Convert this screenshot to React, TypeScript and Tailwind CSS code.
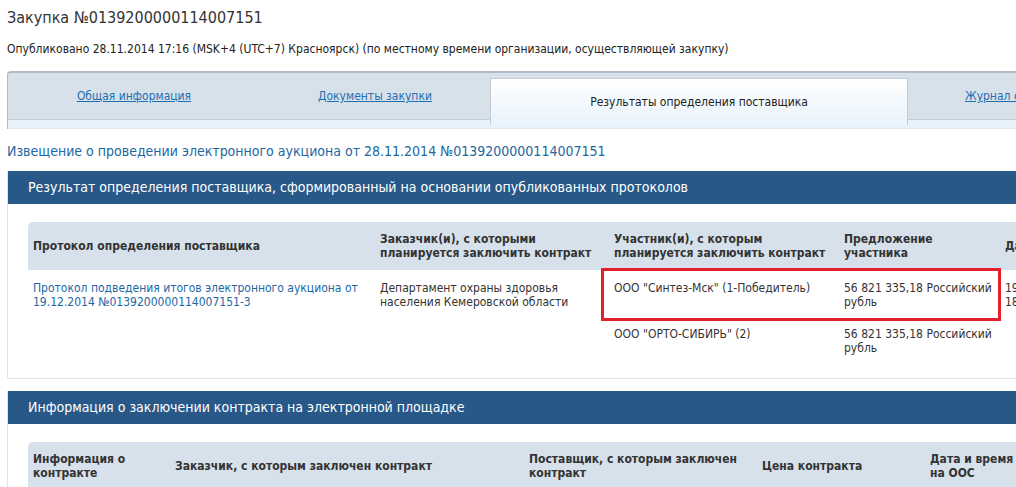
import React from "react";

const font = { fontFamily: '"DejaVu Sans Condensed", "DejaVu Sans", sans-serif' };

function Tab({ label, active, width }: { label: string; active?: boolean; width: string }) {
  if (active) {
    return (
      <div className={`${width} shrink-0 mt-[5px] h-[47px] -mb-px flex items-center justify-center border-x border-t border-[#c3ccd4] bg-gradient-to-b from-white to-[#e9f3fb] text-[12px] text-[#222]`}>
        {label}
      </div>
    );
  }
  return (
    <div className={`${width} shrink-0 h-[46px] flex items-center justify-center`}>
      <span className="text-[12px] text-[#1f6fb3] underline">{label}</span>
    </div>
  );
}

function Cell({ children, bold, className = "" }: { children: React.ReactNode; bold?: boolean; className?: string }) {
  return <div className={`px-[5px] leading-[14px] ${bold ? "font-bold text-[#333]" : ""} ${className}`}>{children}</div>;
}

export default function App() {
  return (
    <div className="relative w-[1016px] h-[487px] overflow-hidden bg-white text-[#333]" style={font}>
      <div className="pl-[7px] pt-[8px]">
        <div className="text-[16px] leading-[20px] text-[#333]">Закупка №0139200000114007151</div>
        <div className="mt-[14px] text-[12px] leading-[14px] text-[#222]">
          Опубликовано 28.11.2014 17:16 (MSK+4 (UTC+7) Красноярск) (по местному времени организации, осуществляющей закупку)
        </div>

        {/* tabs */}
        <div className="mt-[15px] w-[1100px] rounded-tl-[4px] border-t-2 border-l border-[#b0bbc5] bg-[#d6e1ea]">
          <div className="flex h-[46px] items-start">
            <Tab label="Общая информация" width="w-[252px]" />
            <Tab label="Документы закупки" width="w-[230px]" />
            <Tab label="Результаты определения поставщика" width="w-[418px]" active />
            <div className="shrink-0 h-[46px] flex items-center pl-[57px]">
              <span className="text-[12px] text-[#1f6fb3] underline whitespace-nowrap">Журнал событий</span>
            </div>
          </div>
          <div className="h-[10px] bg-[#e8f2fa] border-t border-[#c3ccd4] border-b border-b-[#e2e8ee]" />
        </div>

        <div className="mt-[13px] text-[14px] leading-[18px] text-[#1d67a3]">
          Извещение о проведении электронного аукциона от 28.11.2014 №0139200000114007151
        </div>

        {/* panel 1 */}
        <div className="mt-[11px] w-[1100px] border-l border-b border-[#dde3e9]">
          <div className="h-[33px] bg-[#285887] flex items-center pl-[20px] text-[14px] text-white">
            Результат определения поставщика, сформированный на основании опубликованных протоколов
          </div>
          <div className="pl-[20px] pt-[18px] pb-[23px]">
            <div className="grid grid-cols-[347px_234px_230px_161px_200px] text-[12px]">
              <div className="col-span-5 grid grid-cols-subgrid h-[48px] items-center bg-[#d6e1eb] rounded-tl-[5px]">
                <Cell bold>Протокол определения поставщика</Cell>
                <Cell bold>Заказчик(и), с которыми планируется заключить контракт</Cell>
                <Cell bold>Участник(и), с которым планируется заключить контракт</Cell>
                <Cell bold>Предложение участника</Cell>
                <Cell bold>Дата и время формирования</Cell>
              </div>
              <Cell className="pt-[11px] text-[#1d67a3]">Протокол подведения итогов электронного аукциона от 19.12.2014 №0139200000114007151-3</Cell>
              <Cell className="pt-[11px] text-[#333]">Департамент охраны здоровья населения Кемеровской области</Cell>
              <Cell className="pt-[11px] text-[#333]">ООО "Синтез-Мск" (1-Победитель)</Cell>
              <Cell className="pt-[11px] text-[#333]">56 821 335,18 Российский рубль</Cell>
              <Cell className="pt-[11px] text-[#333]">19.12.2014<br />18:00</Cell>
              <div />
              <div />
              <Cell className="pt-[18px] text-[#333]">ООО "ОРТО-СИБИРЬ" (2)</Cell>
              <Cell className="pt-[18px] text-[#333]">56 821 335,18 Российский рубль</Cell>
              <div />
            </div>
          </div>
        </div>

        {/* panel 2 */}
        <div className="mt-[12px] w-[1100px] border-l border-[#dde3e9]">
          <div className="h-[33px] bg-[#285887] flex items-center pl-[20px] text-[14px] text-white">
            Информация о заключении контракта на электронной площадке
          </div>
          <div className="pl-[20px] pt-[18px]">
            <div className="grid grid-cols-[142px_354px_233px_168px_200px] h-[48px] items-center bg-[#d6e1eb] rounded-tl-[5px] text-[12px]">
              <Cell bold>Информация о контракте</Cell>
              <Cell bold>Заказчик, с которым заключен контракт</Cell>
              <Cell bold>Поставщик, с которым заключен контракт</Cell>
              <Cell bold>Цена контракта</Cell>
              <Cell bold className="whitespace-nowrap">Дата и время размещения<br />на ООС</Cell>
            </div>
          </div>
        </div>
      </div>

      {/* red highlight box */}
      <div className="absolute left-[601px] top-[268px] w-[400px] h-[53px] border-[3px] border-[#e3202b] pointer-events-none" />
    </div>
  );
}
